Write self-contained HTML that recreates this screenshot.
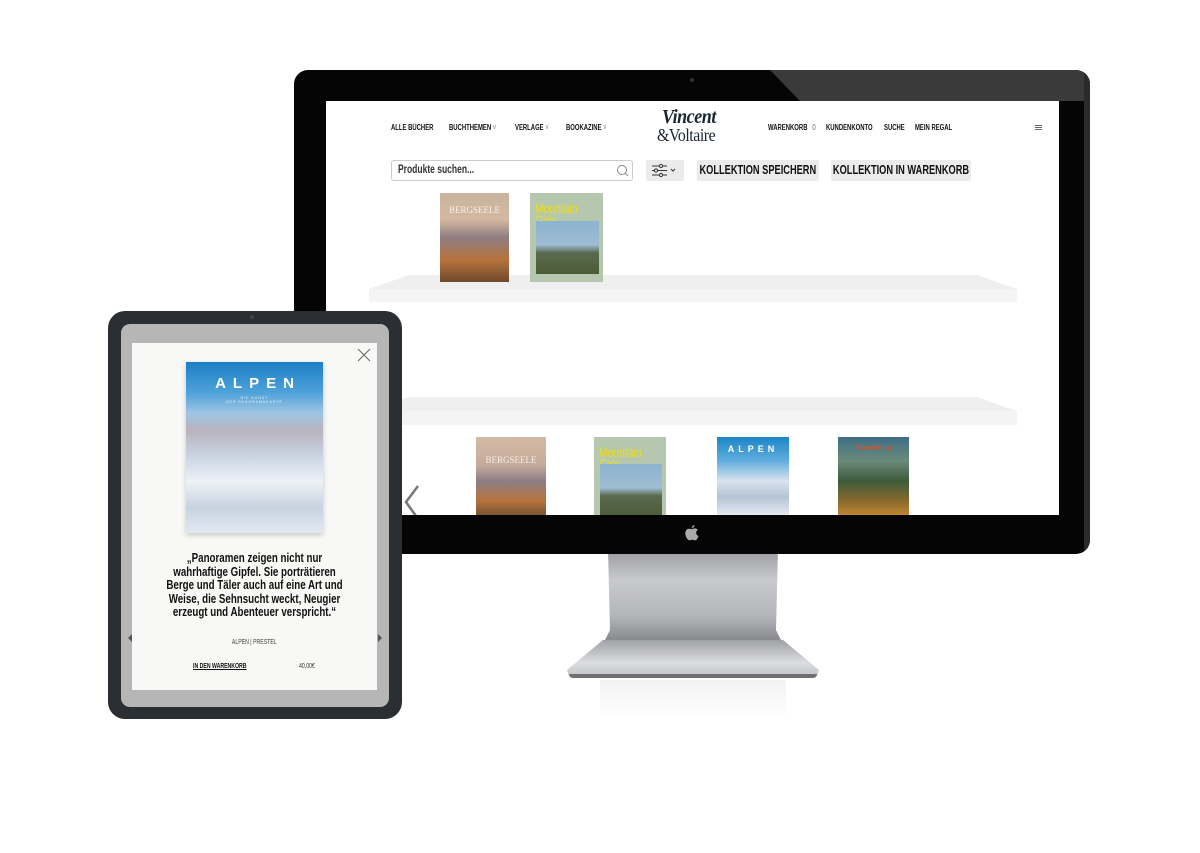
<!DOCTYPE html>
<html><head><meta charset="utf-8">
<style>
*{margin:0;padding:0;box-sizing:border-box}
body{width:1200px;height:853px;background:#fff;position:relative;overflow:hidden;font-family:"Liberation Sans",sans-serif}
.a{position:absolute}
.n{display:inline-block;transform:scaleX(.74);transform-origin:0 0;white-space:nowrap}
.nc{display:inline-block;transform:scaleX(.74);transform-origin:50% 0;white-space:nowrap}
.nav{font-size:8px;font-weight:bold;color:#111;white-space:nowrap}
.btn{background:#ebebeb;font-size:12.5px;font-weight:bold;color:#111;line-height:21px;border-radius:2px;white-space:nowrap;display:flex;justify-content:center}
.cover{position:absolute;overflow:hidden}
</style></head><body>

<!-- monitor stand -->
<div class="a" style="left:600px;top:550px;width:186px;height:120px;background:linear-gradient(180deg,#9a9b9f 0%,#c9cacd 25%,#b4b5b9 55%,#888a8e 75%,#d6d7d9 100%);clip-path:polygon(8px 0,178px 0,176px 80px,186px 100px,0 100px,10px 80px)"></div>
<div class="a" style="left:567px;top:640px;width:252px;height:38px;background:linear-gradient(180deg,#a0a1a5,#dcdde0 60%,#bfc0c3);clip-path:polygon(36px 0,216px 0,252px 30px,250px 36px,2px 36px,0 30px);"></div>
<div class="a" style="left:569px;top:674px;width:248px;height:4px;background:#6e6f73;border-radius:0 0 4px 4px"></div>
<div class="a" style="left:600px;top:680px;width:186px;height:40px;background:linear-gradient(180deg,#f3f3f4,#fff)"></div>

<!-- monitor -->
<div class="a" style="left:294px;top:70px;width:796px;height:484px;background:#050505;border-radius:14px;overflow:hidden">
  <div class="a" style="left:476px;top:0;width:320px;height:31px;background:#3a3a3a;clip-path:polygon(0 0,320px 0,320px 31px,30px 31px)"></div>
  <div class="a" style="left:790px;top:0;width:6px;height:484px;background:#2b2b2b"></div>
  <div class="a" style="left:396px;top:8px;width:4px;height:4px;border-radius:50%;background:#333"></div>
</div>
<div class="a" style="left:326px;top:101px;width:733px;height:414px;background:#fff;overflow:hidden">
  <div class="a nav" style="left:65px;top:22px"><span class="n">ALLE BÜCHER</span></div>
  <div class="a nav" style="left:123px;top:22px"><span class="n">BUCHTHEMEN <span style="font-weight:normal;color:#777">˅</span></span></div>
  <div class="a nav" style="left:189px;top:22px"><span class="n">VERLAGE <span style="font-weight:normal;color:#777">˅</span></span></div>
  <div class="a nav" style="left:240px;top:22px"><span class="n">BOOKAZINE <span style="font-weight:normal;color:#777">˅</span></span></div>
  <div class="a" style="left:336px;top:5px;font-family:'Liberation Serif',serif;font-style:italic;font-weight:bold;font-size:20px;color:#1a2433;letter-spacing:-0.5px"><span class="n" style="transform:scaleX(.9)">Vincent</span></div>
  <div class="a" style="left:331px;top:24px;font-family:'Liberation Serif',serif;font-size:18px;color:#1a2433;letter-spacing:-0.5px"><span class="n" style="transform:scaleX(.88)">&amp;Voltaire</span></div>
  <div class="a nav" style="left:442px;top:22px"><span class="n">WARENKORB&nbsp;&nbsp; <span style="font-weight:normal;color:#666">0</span></span></div>
  <div class="a nav" style="left:500px;top:22px"><span class="n">KUNDENKONTO</span></div>
  <div class="a nav" style="left:558px;top:22px"><span class="n">SUCHE</span></div>
  <div class="a nav" style="left:589px;top:22px"><span class="n">MEIN REGAL</span></div>
  <div class="a" style="left:709px;top:24px;width:7px;height:1px;background:#666;box-shadow:0 2px 0 #666,0 4px 0 #666"></div>

  <div class="a" style="left:65px;top:59px;width:242px;height:21px;border:1px solid #ccc;border-radius:3px;font-size:11.5px;font-weight:bold;color:#333;line-height:19px;padding-left:6px"><span class="n" style="transform-origin:0 50%">Produkte suchen...</span></div>
  <svg class="a" style="left:290px;top:63px" width="13" height="13" viewBox="0 0 13 13"><circle cx="6" cy="6" r="4.5" fill="none" stroke="#888" stroke-width="1"/><path d="M9 9l3 3" stroke="#888"/></svg>
  <div class="a" style="left:320px;top:59px;width:38px;height:21px;background:#ebebeb;border-radius:2px"></div>
  <svg class="a" style="left:324px;top:62px" width="30" height="15" viewBox="0 0 30 15"><path d="M2 3h15M2 7.5h15M2 12h15" stroke="#333" stroke-width="1"/><circle cx="11" cy="3" r="1.6" fill="#ebebeb" stroke="#333"/><circle cx="6" cy="7.5" r="1.6" fill="#ebebeb" stroke="#333"/><circle cx="11" cy="12" r="1.6" fill="#ebebeb" stroke="#333"/><path d="M21 6l2 2 2-2" fill="none" stroke="#333"/></svg>
  <div class="a btn" style="left:371px;top:59px;width:122px;height:21px"><span class="nc">KOLLEKTION SPEICHERN</span></div>
  <div class="a btn" style="left:505px;top:59px;width:140px;height:21px"><span class="nc">KOLLEKTION IN WARENKORB</span></div>

  <!-- shelf 1 -->
  <div class="a" style="left:43px;top:174px;width:648px;height:14px;background:#efefef;clip-path:polygon(40px 0,608px 0,648px 14px,0 14px)"></div>
  <div class="a" style="left:43px;top:188px;width:648px;height:13px;background:#f4f4f4"></div>
  <!-- books row1 -->
  <div class="cover" style="left:114px;top:92px;width:69px;height:89px;background:linear-gradient(180deg,#c9b49e 0%,#d4b7a0 30%,#8e7e82 50%,#b8723c 75%,#6d4a2c 100%)"><div style="font-family:'Liberation Serif',serif;color:#fff;font-size:9px;text-align:center;margin-top:12px;opacity:.8">BERGSEELE</div></div>
  <div class="cover" style="left:204px;top:92px;width:73px;height:89px;background:#b5c7ae"><div style="color:#e8dc2a;font-size:14px;line-height:12px;margin:9px 0 0 5px"><span class="n">Mountain<br>Girls</span></div><div class="a" style="left:6px;top:28px;width:63px;height:53px;background:linear-gradient(180deg,#8bb3d0 0%,#9fbcd2 45%,#5a6a50 60%,#4b5c36 100%)"></div></div>

  <!-- shelf 2 -->
  <div class="a" style="left:43px;top:296px;width:648px;height:14px;background:#efefef;clip-path:polygon(40px 0,608px 0,648px 14px,0 14px)"></div>
  <div class="a" style="left:43px;top:310px;width:648px;height:14px;background:#f4f4f4"></div>
  <div class="cover" style="left:150px;top:336px;width:70px;height:80px;background:linear-gradient(180deg,#d2bba4 0%,#c6aa9a 35%,#8d7f86 55%,#b7733d 80%,#70502f 100%)"><div style="font-family:'Liberation Serif',serif;color:#fff;font-size:9px;text-align:center;margin-top:18px;opacity:.8">BERGSEELE</div></div>
  <div class="cover" style="left:268px;top:336px;width:72px;height:80px;background:#b5c7ae"><div style="color:#e8dc2a;font-size:14px;line-height:12px;margin:9px 0 0 5px"><span class="n">Mountain<br>Girls</span></div><div class="a" style="left:6px;top:27px;width:62px;height:53px;background:linear-gradient(180deg,#8bb3d0 0%,#9fbcd2 45%,#5a6a50 60%,#4b5c36 100%)"></div></div>
  <div class="cover" style="left:391px;top:336px;width:72px;height:80px;background:linear-gradient(180deg,#1b86c6 0%,#62aede 30%,#d9e3ee 55%,#b5c4d6 75%,#e9eef3 100%)"><div style="color:#fff;font-weight:bold;font-size:9px;letter-spacing:4px;text-align:center;margin-top:7px">ALPEN</div></div>
  <div class="cover" style="left:512px;top:336px;width:71px;height:80px;background:linear-gradient(180deg,#3f6d86 0%,#6a8a7a 30%,#3d5a3a 55%,#8a6a2e 80%,#c78a2f 100%)"><div style="color:#e0542a;font-family:'Liberation Serif',serif;font-size:8px;text-align:center;margin-top:6px">Wanderlust</div></div>
  <svg class="a" style="left:76px;top:383px" width="18" height="32" viewBox="0 0 18 32"><path d="M16 2L4 18l10 14" fill="none" stroke="#777" stroke-width="2.5"/></svg>
</div>
<!-- apple logo -->
<svg class="a" style="left:685px;top:525px" width="14" height="16" viewBox="0 0 14 16"><path d="M9.5 0c0 1.5-1.2 3-2.7 3C6.7 1.6 8 .2 9.5 0zM7 4c1 0 2-.7 3-.6 1.3.1 2.3.7 2.8 1.6-2.5 1.5-2 5 .7 6-.6 1.7-1.8 4.4-3.4 4.4-1 0-1.4-.6-2.8-.6s-1.8.6-2.8.6C2.5 15.4.3 11.4.3 8.3.3 5.5 2 3.8 3.9 3.8 5 3.8 6 4 7 4z" fill="#aaa"/></svg>

<!-- tablet -->
<div class="a" style="left:108px;top:311px;width:294px;height:408px;background:#2b2e33;border-radius:17px"></div>
<div class="a" style="left:121px;top:324px;width:268px;height:383px;background:#b6b6b6;border-radius:9px"></div>
<div class="a" style="left:250px;top:315px;width:4px;height:4px;border-radius:50%;background:#444"></div>
<div class="a" style="left:132px;top:343px;width:245px;height:347px;background:#f8f8f6"></div>
<svg class="a" style="left:357px;top:348px" width="14" height="14" viewBox="0 0 14 14"><path d="M1 1l12 12M13 1L1 13" stroke="#666" stroke-width="1"/></svg>
<div class="a" style="left:186px;top:362px;width:137px;height:171px;background:linear-gradient(180deg,#1c7fc4 0%,#4fa2da 18%,#9fc6e3 30%,#b9b3bc 40%,#c9d4e3 55%,#eef2f6 70%,#c7d3e1 85%,#e3e9f0 100%);box-shadow:0 2px 5px rgba(0,0,0,.2)">
  <div style="color:#fff;font-weight:bold;font-size:15px;letter-spacing:7px;text-align:center;margin-top:13px;padding-left:7px">ALPEN</div>
  <div style="color:#e8f1f8;font-size:3.5px;letter-spacing:1px;text-align:center;margin-top:4px;line-height:4px">DIE KUNST<br>DER PANORAMAKARTE</div>
</div>
<div class="a" style="left:132px;top:551px;width:245px;text-align:center;font-size:13px;font-weight:bold;line-height:13.5px;color:#111;display:flex;justify-content:center"><span class="nc" style="transform:scaleX(.75);text-align:center">„Panoramen zeigen nicht nur<br>wahrhaftige Gipfel. Sie porträtieren<br>Berge und Täler auch auf eine Art und<br>Weise, die Sehnsucht weckt, Neugier<br>erzeugt und Abenteuer verspricht.“</span></div>
<div class="a" style="left:132px;top:639px;width:245px;font-size:7px;color:#444;display:flex;justify-content:center"><span class="nc">ALPEN | PRESTEL</span></div>
<div class="a" style="left:193px;top:663px;font-size:7px;font-weight:bold;color:#111"><span class="n" style="text-decoration:underline">IN DEN WARENKORB</span></div>
<div class="a" style="left:299px;top:663px;font-size:7px;color:#333"><span class="n">40,00€</span></div>
<div class="a" style="left:128px;top:634px;width:0;height:0;border-top:4px solid transparent;border-bottom:4px solid transparent;border-right:4px solid #555"></div>
<div class="a" style="left:378px;top:634px;width:0;height:0;border-top:4px solid transparent;border-bottom:4px solid transparent;border-left:4px solid #555"></div>
</body></html>
